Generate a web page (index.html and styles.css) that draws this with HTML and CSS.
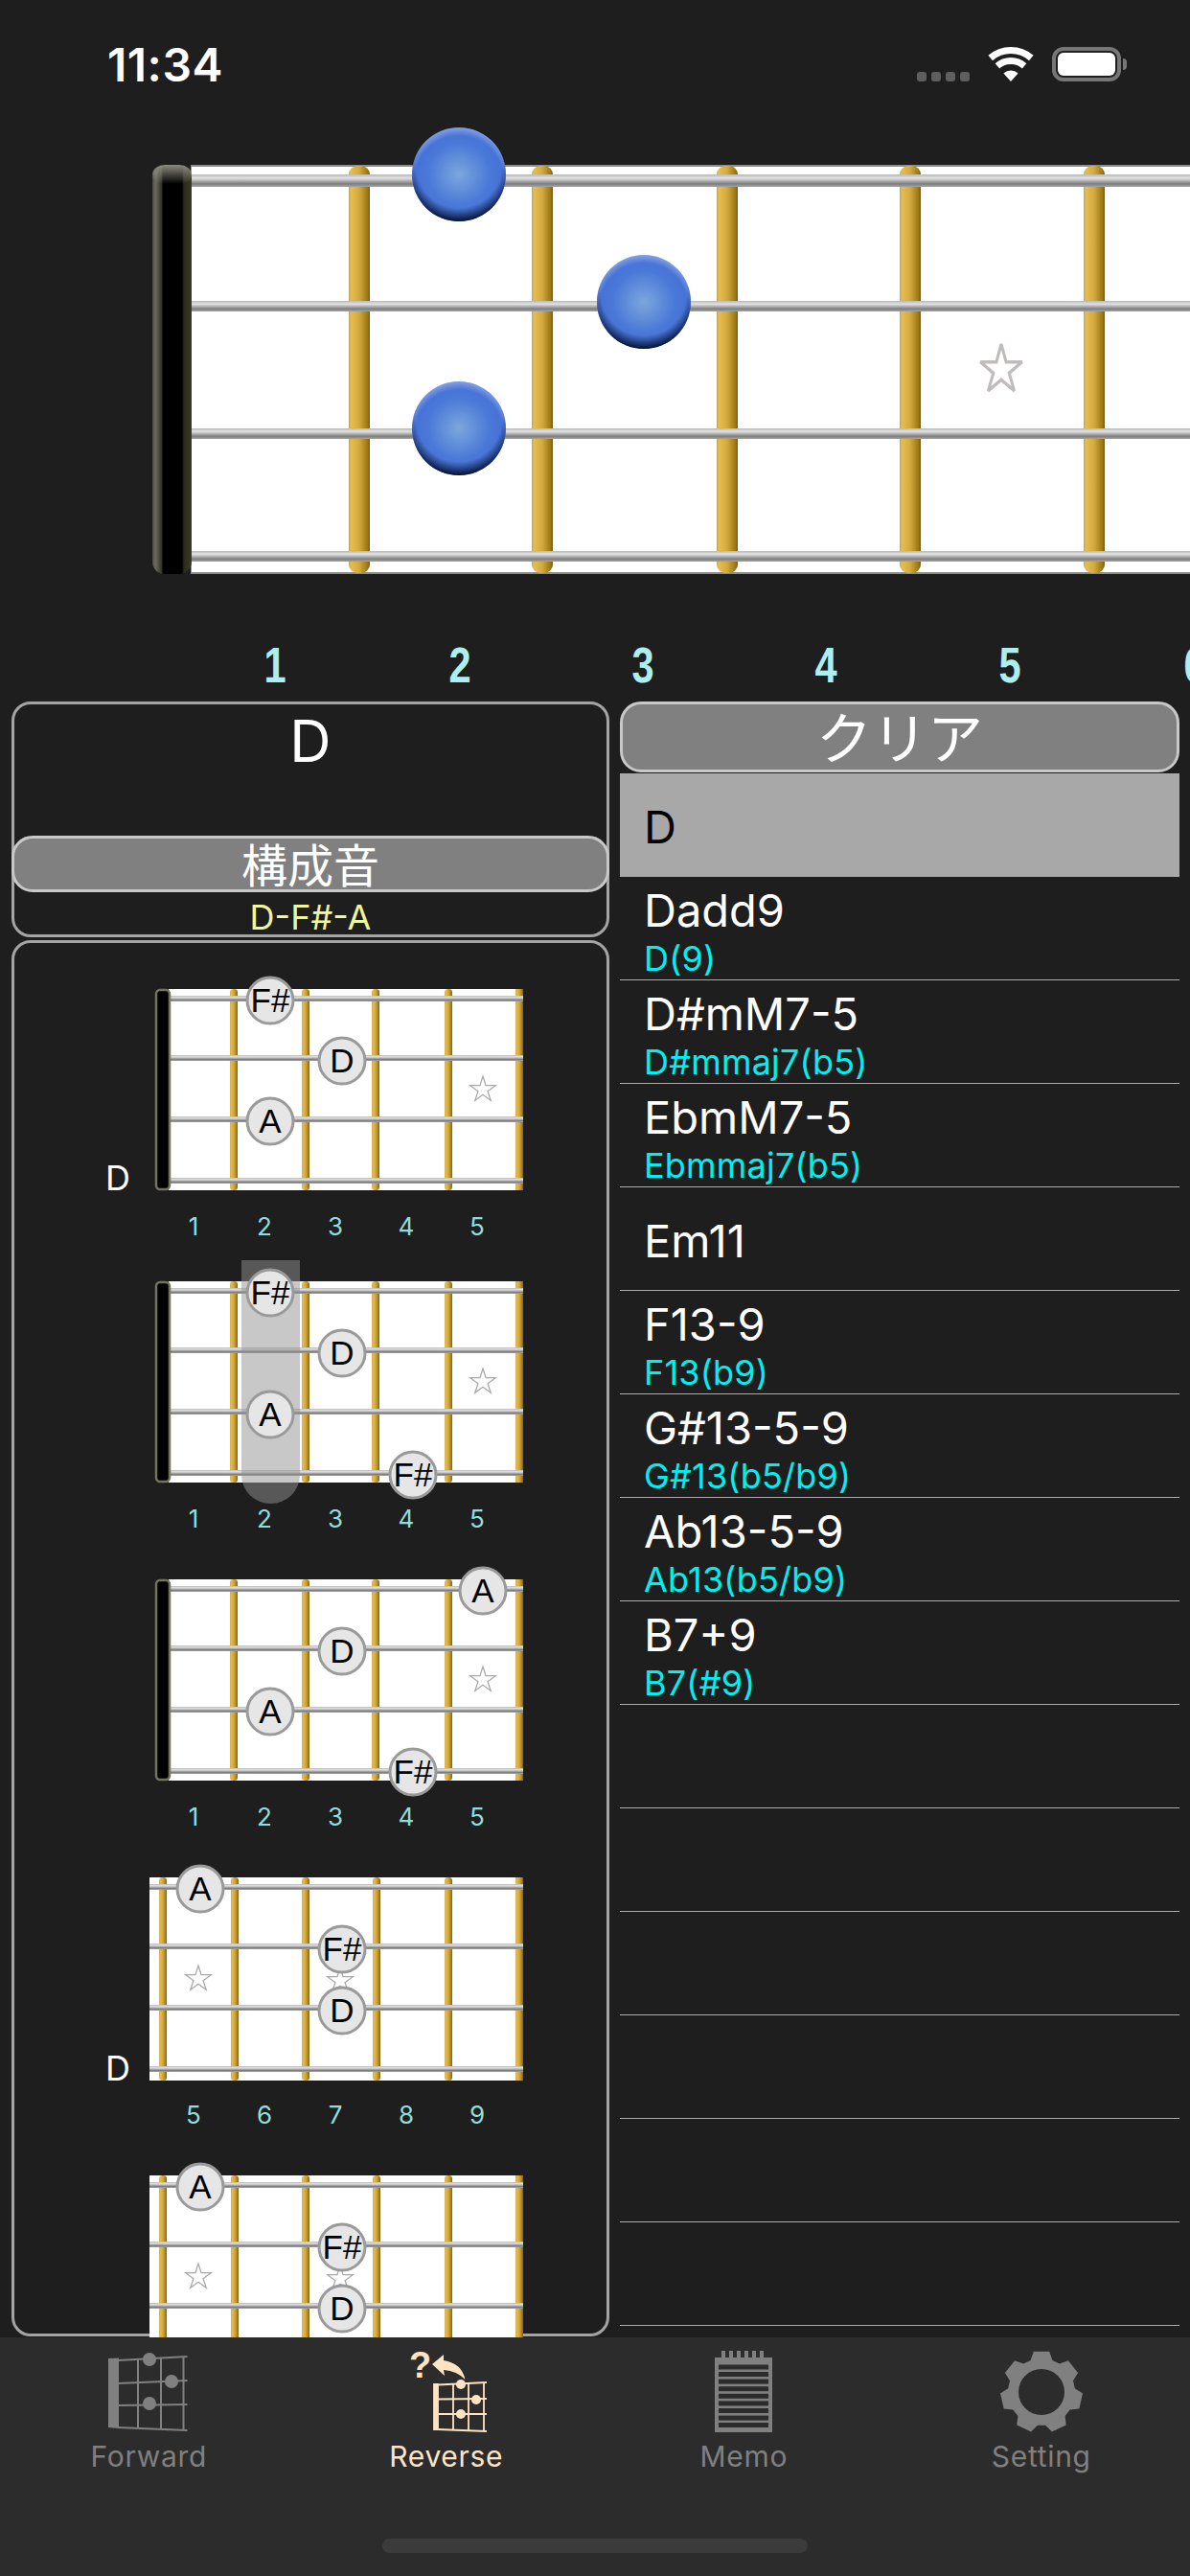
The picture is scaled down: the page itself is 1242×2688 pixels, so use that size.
FILE: index.html

```html
<!DOCTYPE html>
<html lang="ja">
<head>
  <meta charset="UTF-8" />
  <meta name="viewport" content="width=device-width, initial-scale=1.0"/>
  <title>Reverse</title>
  <link rel="stylesheet" href="styles.css">
</head>
<body>
  <!-- shared gradients and fretboards -->
  <svg class="sprite" width="0" height="0">
    <defs>
      <linearGradient id="g-fret" x1="0" y1="0" x2="1" y2="0">
        <stop offset="0" stop-color="#b9a26a"/>
        <stop offset="0.1" stop-color="#e6bd4f"/>
        <stop offset="0.5" stop-color="#d3a93e"/>
        <stop offset="0.9" stop-color="#9c7512"/>
        <stop offset="1" stop-color="#6f5a2a"/>
      </linearGradient>
      <linearGradient id="g-string" x1="0" y1="0" x2="0" y2="1">
        <stop offset="0" stop-color="#b8b8b8"/>
        <stop offset="0.3" stop-color="#e2e2e2"/>
        <stop offset="0.75" stop-color="#7e7e7e"/>
        <stop offset="1" stop-color="#a4a4a4"/>
      </linearGradient>
      <linearGradient id="g-nut" x1="0" y1="0" x2="1" y2="0">
        <stop offset="0" stop-color="#4a4a44"/>
        <stop offset="0.08" stop-color="#6c6c62"/>
        <stop offset="0.24" stop-color="#303028"/>
        <stop offset="0.27" stop-color="#000"/>
        <stop offset="0.76" stop-color="#000"/>
        <stop offset="0.8" stop-color="#2a2a1c"/>
        <stop offset="1" stop-color="#3a3a28"/>
      </linearGradient>
      <linearGradient id="g-nut-cap" x1="0" y1="0" x2="0" y2="1">
        <stop offset="0" stop-color="#8c8c80"/>
        <stop offset="1" stop-color="#8c8c80" stop-opacity="0"/>
      </linearGradient>
      <radialGradient id="g-dot" cx="0.5" cy="0.5" r="0.5">
        <stop offset="0" stop-color="#7aa8dc"/>
        <stop offset="0.65" stop-color="#4b79d8"/>
        <stop offset="1" stop-color="#4470d6"/>
      </radialGradient>
      <radialGradient id="g-dot-low" cx="0.5" cy="0.4" r="0.6">
        <stop offset="0.76" stop-color="#0a1a44" stop-opacity="0"/>
        <stop offset="1" stop-color="#061030"/>
      </radialGradient>
      <radialGradient id="g-dot-high" cx="0.5" cy="0.56" r="0.56">
        <stop offset="0.84" stop-color="#fff" stop-opacity="0"/>
        <stop offset="1" stop-color="#fff" stop-opacity="0.35"/>
      </radialGradient>

      <polygon id="star" points="0,-100 22,-31 95,-31 36,12 59,81 0,38 -59,81 -36,12 -95,-31 -22,-31"/>

      <g id="strings-small">
        <rect x="0" y="47" width="531" height="6" fill="url(#g-string)"/>
        <rect x="0" y="109" width="531" height="6" fill="url(#g-string)"/>
        <rect x="0" y="173" width="531" height="6" fill="url(#g-string)"/>
        <rect x="0" y="237" width="531" height="6" fill="url(#g-string)"/>
      </g>

      <g id="board-nut">
        <rect x="161" y="40" width="370" height="210" fill="#fff"/>
        <rect x="225" y="40" width="8" height="210" rx="3.5" fill="url(#g-fret)"/>
        <rect x="300" y="40" width="8" height="210" rx="3.5" fill="url(#g-fret)"/>
        <rect x="373" y="40" width="8" height="210" rx="3.5" fill="url(#g-fret)"/>
        <rect x="449" y="40" width="8" height="210" rx="3.5" fill="url(#g-fret)"/>
        <rect x="523" y="40" width="8" height="210" fill="url(#g-fret)"/>
        <svg x="161" y="0" width="370" height="311" viewBox="161 0 370 311"><use href="#strings-small"/></svg>
        <rect x="148" y="41" width="14" height="208" rx="4" fill="#000" stroke="#74745e" stroke-width="2.5"/>
      </g>

      <g id="board-open">
        <rect x="141" y="40" width="390" height="212" fill="#fff"/>
        <rect x="151" y="40" width="8" height="212" rx="3.5" fill="url(#g-fret)"/>
        <rect x="226" y="40" width="8" height="212" rx="3.5" fill="url(#g-fret)"/>
        <rect x="300" y="40" width="8" height="212" rx="3.5" fill="url(#g-fret)"/>
        <rect x="374" y="40" width="8" height="212" rx="3.5" fill="url(#g-fret)"/>
        <rect x="449" y="40" width="8" height="212" rx="3.5" fill="url(#g-fret)"/>
        <rect x="523" y="40" width="8" height="212" fill="url(#g-fret)"/>
        <svg x="141" y="0" width="390" height="311" viewBox="141 0 390 311"><use href="#strings-small"/></svg>
      </g>

      <g id="big-dot">
        <circle r="49" fill="url(#g-dot)"/>
        <circle r="49" fill="url(#g-dot-low)"/>
        <circle r="49" fill="url(#g-dot-high)"/>
      </g>
    </defs>
  </svg>

  <div class="phone">
    <div class="status-bar">
      <span class="clock">11:34</span>
      <div class="status-icons">
        <div class="signal"><i></i><i></i><i></i><i></i></div>
        <svg class="wifi" width="48" height="36" viewBox="-24 -36 48 36">
          <path d="M-21.3 -24.5A32.5 32.5 0 0 1 21.3 -24.5" fill="none" stroke="#fff" stroke-width="7"/>
          <path d="M-14.1 -16.2A21.5 21.5 0 0 1 14.1 -16.2" fill="none" stroke="#fff" stroke-width="7"/>
          <path d="M0 0L-7.6 -8.6A11.5 11.5 0 0 1 7.6 -8.6Z" fill="#fff"/>
        </svg>
        <div class="battery"><div class="battery-level"></div></div>
      </div>
    </div>

    <!-- big fretboard, drawn in page coordinates -->
    <svg class="neck" width="1242" height="600" viewBox="0 132 1242 600">
      <rect x="199" y="172" width="1043" height="427" fill="#8c8c8c"/>
      <rect x="200" y="174" width="1042" height="423" fill="#fff"/>
      <rect x="364" y="173" width="22" height="425" rx="9" fill="url(#g-fret)"/>
      <rect x="555" y="173" width="22" height="425" rx="9" fill="url(#g-fret)"/>
      <rect x="748" y="173" width="22" height="425" rx="9" fill="url(#g-fret)"/>
      <rect x="939" y="173" width="22" height="425" rx="9" fill="url(#g-fret)"/>
      <rect x="1131" y="173" width="22" height="425" rx="9" fill="url(#g-fret)"/>
      <rect x="200" y="182" width="1042" height="13" fill="url(#g-string)"/>
      <rect x="200" y="314" width="1042" height="11" fill="url(#g-string)"/>
      <rect x="200" y="447" width="1042" height="11" fill="url(#g-string)"/>
      <rect x="200" y="575" width="1042" height="11" fill="url(#g-string)"/>
      <rect x="159" y="172" width="41" height="427" rx="13" fill="url(#g-nut)"/>
      <rect x="159" y="172" width="41" height="20" rx="13" fill="url(#g-nut-cap)"/>
      <use href="#star" transform="translate(1045 386) scale(.23 .27)" class="neck-star"/>
      <use href="#big-dot" x="479" y="182"/>
      <use href="#big-dot" x="672" y="315"/>
      <use href="#big-dot" x="479" y="447"/>
      <text class="neck-fret" transform="translate(287 712) scale(.8 1)">1</text>
      <text class="neck-fret" transform="translate(480 712) scale(.8 1)">2</text>
      <text class="neck-fret" transform="translate(671 712) scale(.8 1)">3</text>
      <text class="neck-fret" transform="translate(862 712) scale(.8 1)">4</text>
      <text class="neck-fret" transform="translate(1054 712) scale(.8 1)">5</text>
      <text class="neck-fret" transform="translate(1247 712) scale(.8 1)">6</text>
    </svg>

    <div class="main">
      <div class="left-col">
        <div class="panel chord-info">
          <div class="chord-name">D</div>
          <div class="gray-btn tones-btn">構成音</div>
          <div class="tones">D-F#-A</div>
        </div>

        <div class="panel chord-list">
          <svg class="chord first" width="618" height="311">
            <use href="#board-nut"/>
            <use href="#star" class="small-star" transform="translate(489 145) scale(.14)"/>
            <g class="note" transform="translate(267 52)"><circle r="24"/><text y="12">F#</text></g>
            <g class="note" transform="translate(342 115)"><circle r="24"/><text y="12">D</text></g>
            <g class="note" transform="translate(267 178)"><circle r="24"/><text y="12">A</text></g>
            <text class="root" x="95" y="250">D</text>
            <text class="fret-no" x="187" y="297">1</text>
            <text class="fret-no" x="261" y="297">2</text>
            <text class="fret-no" x="335" y="297">3</text>
            <text class="fret-no" x="409" y="297">4</text>
            <text class="fret-no" x="483" y="297">5</text>
          </svg>

          <svg class="chord" width="618" height="311">
            <use href="#board-nut"/>
            <path d="M237 18H298V242A30.5 30 0 0 1 237 242Z" fill="rgba(145,145,145,.5)"/>
            <use href="#star" class="small-star" transform="translate(489 145) scale(.14)"/>
            <g class="note" transform="translate(267 52)"><circle r="24"/><text y="12">F#</text></g>
            <g class="note" transform="translate(342 115)"><circle r="24"/><text y="12">D</text></g>
            <g class="note" transform="translate(267 179)"><circle r="24"/><text y="12">A</text></g>
            <g class="note" transform="translate(416 242)"><circle r="24"/><text y="12">F#</text></g>
            <text class="fret-no" x="187" y="297">1</text>
            <text class="fret-no" x="261" y="297">2</text>
            <text class="fret-no" x="335" y="297">3</text>
            <text class="fret-no" x="409" y="297">4</text>
            <text class="fret-no" x="483" y="297">5</text>
          </svg>

          <svg class="chord" width="618" height="311">
            <use href="#board-nut"/>
            <use href="#star" class="small-star" transform="translate(489 145) scale(.14)"/>
            <g class="note" transform="translate(489 52)"><circle r="24"/><text y="12">A</text></g>
            <g class="note" transform="translate(342 115)"><circle r="24"/><text y="12">D</text></g>
            <g class="note" transform="translate(267 178)"><circle r="24"/><text y="12">A</text></g>
            <g class="note" transform="translate(416 241)"><circle r="24"/><text y="12">F#</text></g>
            <text class="fret-no" x="187" y="297">1</text>
            <text class="fret-no" x="261" y="297">2</text>
            <text class="fret-no" x="335" y="297">3</text>
            <text class="fret-no" x="409" y="297">4</text>
            <text class="fret-no" x="483" y="297">5</text>
          </svg>

          <svg class="chord" width="618" height="311">
            <use href="#board-open"/>
            <use href="#star" class="small-star" transform="translate(192 146) scale(.14)"/>
            <use href="#star" class="small-star" transform="translate(340 148) scale(.14)"/>
            <g class="note" transform="translate(194 52)"><circle r="24"/><text y="12">A</text></g>
            <g class="note" transform="translate(342 115)"><circle r="24"/><text y="12">F#</text></g>
            <g class="note" transform="translate(342 179)"><circle r="24"/><text y="12">D</text></g>
            <text class="root" x="95" y="252">D</text>
            <text class="fret-no" x="187" y="297">5</text>
            <text class="fret-no" x="261" y="297">6</text>
            <text class="fret-no" x="335" y="297">7</text>
            <text class="fret-no" x="409" y="297">8</text>
            <text class="fret-no" x="483" y="297">9</text>
          </svg>

          <svg class="chord" width="618" height="311">
            <use href="#board-open"/>
            <use href="#star" class="small-star" transform="translate(192 146) scale(.14)"/>
            <use href="#star" class="small-star" transform="translate(340 148) scale(.14)"/>
            <g class="note" transform="translate(194 52)"><circle r="24"/><text y="12">A</text></g>
            <g class="note" transform="translate(342 115)"><circle r="24"/><text y="12">F#</text></g>
            <g class="note" transform="translate(342 179)"><circle r="24"/><text y="12">D</text></g>
          </svg>
        </div>
      </div>

      <div class="right-col">
        <div class="gray-btn clear-btn">クリア</div>
        <div class="row row-single selected"><div class="row-title">D</div></div>
        <div class="row"><div class="row-title">Dadd9</div><div class="row-sub">D(9)</div></div>
        <div class="row"><div class="row-title">D#mM7-5</div><div class="row-sub">D#mmaj7(b5)</div></div>
        <div class="row"><div class="row-title">EbmM7-5</div><div class="row-sub">Ebmmaj7(b5)</div></div>
        <div class="row row-single"><div class="row-title">Em11</div></div>
        <div class="row"><div class="row-title">F13-9</div><div class="row-sub">F13(b9)</div></div>
        <div class="row"><div class="row-title">G#13-5-9</div><div class="row-sub">G#13(b5/b9)</div></div>
        <div class="row"><div class="row-title">Ab13-5-9</div><div class="row-sub">Ab13(b5/b9)</div></div>
        <div class="row"><div class="row-title">B7+9</div><div class="row-sub">B7(#9)</div></div>
        <div class="row"></div>
        <div class="row"></div>
        <div class="row"></div>
        <div class="row"></div>
        <div class="row"></div>
        <div class="row"></div>
      </div>
    </div>

    <div class="tab-bar">
      <div class="tabs">
        <div class="tab">
          <svg class="tab-icon" width="92" height="92" viewBox="0 0 92 92" fill="none" stroke="#808080" stroke-width="2">
            <path d="M5 12L14 11.5V83L5 82Z" fill="#808080"/>
            <path d="M14 13L86.5 9M14 37L86.5 34M14 60L86.5 59M14 83L86.5 86"/>
            <path d="M35 12V84M59 10V85M82.5 9V86"/>
            <g fill="#808080" stroke="none">
              <circle cx="47" cy="12" r="7"/>
              <circle cx="70" cy="35" r="7"/>
              <circle cx="47" cy="58" r="7"/>
            </g>
          </svg>
          <span class="tab-label">Forward</span>
        </div>
        <div class="tab active">
          <svg class="tab-icon" width="92" height="92" viewBox="0 0 92 92" fill="none" stroke="#ffe4c4" stroke-width="1.8">
            <text class="tab-question" x="7" y="31">?</text>
            <path d="M31 17L43 7V13Q62 16 65.5 33Q57 24 43 23L44 29Z" fill="#ffe4c4" stroke="none"/>
            <path d="M33 38L37 38V85L33 85Z" fill="#ffe4c4"/>
            <path d="M37 38.5L88 36M37 53.5L88 53M37 69L88 69M37 85L88 87"/>
            <path d="M53 38V86M69 37V86M85 36V87"/>
            <g fill="#ffe4c4" stroke="none">
              <circle cx="61" cy="38" r="5"/>
              <circle cx="77" cy="54" r="5"/>
              <circle cx="61" cy="69" r="5"/>
            </g>
          </svg>
          <span class="tab-label">Reverse</span>
        </div>
        <div class="tab">
          <svg class="tab-icon" width="92" height="92" viewBox="0 0 92 92">
            <g fill="#808080">
              <rect x="16" y="10" width="60" height="78"/>
              <rect x="23" y="3" width="4" height="8"/>
              <rect x="31" y="3" width="4" height="8"/>
              <rect x="39" y="3" width="4" height="8"/>
              <rect x="47" y="3" width="4" height="8"/>
              <rect x="55" y="3" width="4" height="8"/>
              <rect x="63" y="3" width="4" height="8"/>
            </g>
            <g fill="#2c2c2c">
              <rect x="20" y="17.5" width="52" height="5"/>
              <rect x="20" y="25" width="52" height="5"/>
              <rect x="20" y="32.6" width="52" height="5"/>
              <rect x="20" y="40.2" width="52" height="5"/>
              <rect x="20" y="47.8" width="52" height="5"/>
              <rect x="20" y="55.4" width="52" height="5"/>
              <rect x="20" y="63" width="52" height="5"/>
              <rect x="20" y="70.6" width="52" height="5"/>
              <rect x="20" y="78" width="52" height="5"/>
            </g>
          </svg>
          <span class="tab-label">Memo</span>
        </div>
        <div class="tab">
          <svg class="tab-icon" width="92" height="92" viewBox="-46 -46 92 92">
            <path fill="#808080" fill-rule="evenodd" d="M-11.4 -33.1L-8.2 -42.2L8.2 -42.2L11.4 -33.1L18.8 -29.5L27.9 -32.7L38.1 -19.9L33 -11.7L34.8 -3.7L43 1.4L39.3 17.4L29.7 18.5L24.6 24.9L25.7 34.5L10.9 41.6L4.1 34.8L-4.1 34.8L-10.9 41.6L-25.7 34.5L-24.6 24.9L-29.7 18.5L-39.3 17.4L-43 1.4L-34.8 -3.7L-33 -11.7L-38.1 -19.9L-27.9 -32.7L-18.8 -29.5ZM24 0A24 24 0 1 0 -24 0A24 24 0 1 0 24 0Z"/>
          </svg>
          <span class="tab-label">Setting</span>
        </div>
      </div>
      <div class="home-indicator"></div>
    </div>
  </div>
</body>
</html>
```

FILE: styles.css

```css
body {
  margin: 0;
  background-color: #1e1e1e;
  font-family: "Inter", "Liberation Sans", sans-serif;
  color: #fff;
}

.sprite {
  position: absolute;
}

.phone {
  width: 1242px;
  height: 2688px;
  display: flex;
  flex-direction: column;
  overflow: hidden;
}

/* status bar */
.status-bar {
  height: 132px;
  flex: none;
  display: flex;
  justify-content: space-between;
  align-items: flex-start;
  padding: 0 72px 0 112px;
  box-sizing: border-box;
}

.clock {
  margin-top: 40px;
  font-size: 48px;
  line-height: 56px;
  font-weight: 600;
  letter-spacing: 0.5px;
}

.status-icons {
  display: flex;
  align-items: flex-start;
  gap: 19px;
  padding-top: 49px;
}

.signal {
  display: flex;
  gap: 5px;
  margin-top: 26px;
}

.signal i {
  display: block;
  width: 10px;
  height: 10px;
  border-radius: 3px;
  background-color: #5f5f5f;
}

.battery {
  position: relative;
  width: 72px;
  height: 36px;
  box-sizing: border-box;
  border: 4px solid #777;
  border-radius: 12px;
  padding: 2px;
}

.battery::after {
  content: "";
  position: absolute;
  right: -10px;
  top: 8px;
  width: 4px;
  height: 12px;
  border-radius: 0 4px 4px 0;
  background-color: #777;
}

.battery-level {
  height: 100%;
  border-radius: 6px;
  background-color: #fff;
}

/* big neck */
.neck {
  display: block;
  flex: none;
}

.neck-star {
  fill: #fff;
  stroke: #c0bcbc;
  stroke-width: 13px;
  stroke-miterlimit: 2;
}

.neck-fret {
  font-family: "Liberation Sans", sans-serif;
  font-size: 52px;
  font-weight: 700;
  fill: #aeeeee;
  text-anchor: middle;
}

/* main two columns */
.main {
  height: 1707px;
  flex: none;
  display: grid;
  grid-template-columns: 624px 584px;
  column-gap: 11px;
  padding-left: 12px;
  overflow: hidden;
}

.left-col {
  display: flex;
  flex-direction: column;
  gap: 3px;
}

.panel {
  box-sizing: border-box;
  border: 3px solid #a4a4a4;
  border-radius: 20px;
}

.chord-info {
  height: 246px;
  flex: none;
  text-align: center;
}

.chord-name {
  height: 137px;
  box-sizing: border-box;
  padding-top: 2px;
  font-size: 60px;
  line-height: 72px;
}

.gray-btn {
  box-sizing: border-box;
  background-color: #808080;
  border: 3px solid #c8c8c8;
  text-align: center;
  font-family: "Noto Sans CJK JP", sans-serif;
}

.tones-btn {
  height: 59px;
  margin: 0 -3px;
  border-radius: 22px;
  font-size: 48px;
  line-height: 50px;
}

.tones {
  padding-top: 8px;
  font-size: 36px;
  line-height: 36px;
  color: #eef79c;
}

.chord-list {
  height: 1457px;
  flex: none;
  padding-top: 8px;
}

.chord {
  display: block;
  overflow: visible;
}

.chord.first {
  margin-bottom: -6px;
}

.note circle {
  fill: #e6e6e6;
  stroke: #9a9a9a;
  stroke-width: 3px;
}

.note text {
  font-family: "Liberation Sans", sans-serif;
  font-size: 35px;
  fill: #000;
  text-anchor: middle;
}

.small-star {
  fill: #fff;
  stroke: #a8a8a8;
  stroke-width: 9px;
}

.root {
  font-size: 36px;
  fill: #fff;
}

.fret-no {
  font-size: 26px;
  fill: #8fdede;
  text-anchor: middle;
}

/* right list */
.clear-btn {
  height: 74px;
  border-radius: 22px;
  font-size: 58px;
  line-height: 64px;
  margin-bottom: 1px;
}

.row {
  height: 108px;
  box-sizing: border-box;
  padding: 7px 0 0 25px;
  border-bottom: 1px solid #aaa;
}

.row-single {
  padding-top: 28px;
}

.row.selected {
  background-color: #a8a8a8;
  border-bottom: none;
  color: #000;
}

.row-title {
  font-size: 47px;
  line-height: 56px;
}

.row-sub {
  font-size: 36px;
  line-height: 45px;
  letter-spacing: 0.2px;
  color: #00f0f0;
}

/* tab bar */
.tab-bar {
  flex: 1;
  display: flex;
  flex-direction: column;
  align-items: center;
  background-color: #2c2c2c;
}

.tabs {
  height: 210px;
  width: 100%;
  flex: none;
  display: grid;
  grid-template-columns: repeat(4, 1fr);
}

.tab {
  display: flex;
  flex-direction: column;
  align-items: center;
  padding-top: 11px;
  color: #808080;
}

.tab.active {
  color: #ffe4c4;
}

.tab-icon {
  display: block;
  flex: none;
}

.tab-question {
  font-family: "Liberation Sans", sans-serif;
  font-size: 38px;
  font-weight: 700;
  fill: #ffe4c4;
  stroke: none;
}

.tab-label {
  margin-top: 3px;
  font-size: 30px;
  line-height: 36px;
  letter-spacing: 0.7px;
}

.home-indicator {
  width: 444px;
  height: 15px;
  border-radius: 8px;
  background-color: #3b3b3b;
}
```
